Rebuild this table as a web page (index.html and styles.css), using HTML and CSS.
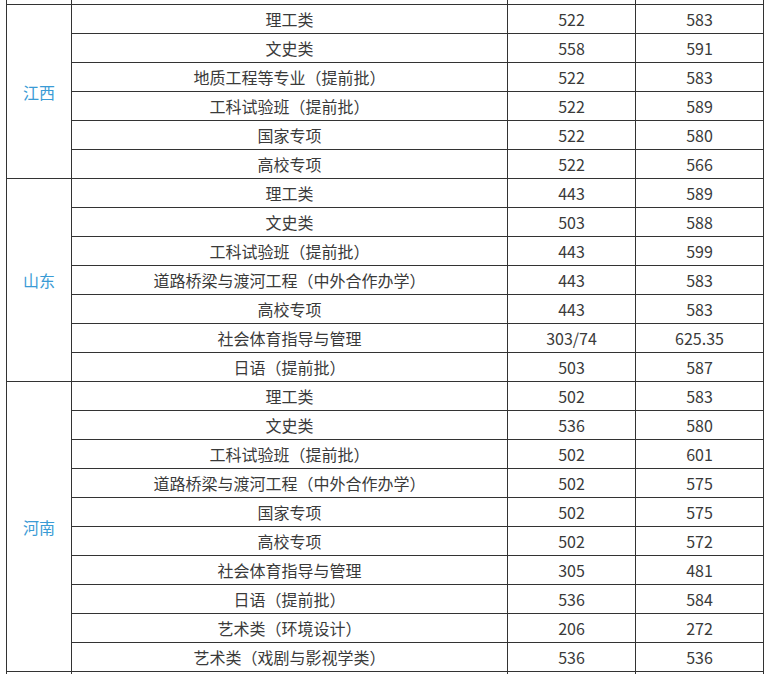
FILE: index.html
```html
<!DOCTYPE html>
<html lang="zh">
<head>
<meta charset="utf-8">
<link rel="stylesheet" href="styles.css">
</head>
<body>
<table class="scores">
  <colgroup>
    <col class="c-prov"><col class="c-major"><col class="c-num"><col class="c-num">
  </colgroup>
  <tbody>
    <tr><td></td><td></td><td></td><td></td></tr>
    <tr><td class="prov" rowspan="6">江西</td><td>理工类</td><td>522</td><td>583</td></tr>
    <tr><td>文史类</td><td>558</td><td>591</td></tr>
    <tr><td>地质工程等专业（提前批）</td><td>522</td><td>583</td></tr>
    <tr><td>工科试验班（提前批）</td><td>522</td><td>589</td></tr>
    <tr><td>国家专项</td><td>522</td><td>580</td></tr>
    <tr><td>高校专项</td><td>522</td><td>566</td></tr>
    <tr><td class="prov" rowspan="7">山东</td><td>理工类</td><td>443</td><td>589</td></tr>
    <tr><td>文史类</td><td>503</td><td>588</td></tr>
    <tr><td>工科试验班（提前批）</td><td>443</td><td>599</td></tr>
    <tr><td>道路桥梁与渡河工程（中外合作办学）</td><td>443</td><td>583</td></tr>
    <tr><td>高校专项</td><td>443</td><td>583</td></tr>
    <tr><td>社会体育指导与管理</td><td>303/74</td><td>625.35</td></tr>
    <tr><td>日语（提前批）</td><td>503</td><td>587</td></tr>
    <tr><td class="prov" rowspan="10">河南</td><td>理工类</td><td>502</td><td>583</td></tr>
    <tr><td>文史类</td><td>536</td><td>580</td></tr>
    <tr><td>工科试验班（提前批）</td><td>502</td><td>601</td></tr>
    <tr><td>道路桥梁与渡河工程（中外合作办学）</td><td>502</td><td>575</td></tr>
    <tr><td>国家专项</td><td>502</td><td>575</td></tr>
    <tr><td>高校专项</td><td>502</td><td>572</td></tr>
    <tr><td>社会体育指导与管理</td><td>305</td><td>481</td></tr>
    <tr><td>日语（提前批）</td><td>536</td><td>584</td></tr>
    <tr><td>艺术类（环境设计）</td><td>206</td><td>272</td></tr>
    <tr><td>艺术类（戏剧与影视学类）</td><td>536</td><td>536</td></tr>
    <tr><td></td><td></td><td></td><td></td></tr>
  </tbody>
</table>
</body>
</html>
```
FILE: styles.css
```css
html, body {
  margin: 0;
  padding: 0;
  background: #ffffff;
  overflow: hidden;
}
.scores {
  margin: -25px 0 0 6px;
  border-collapse: collapse;
  table-layout: fixed;
  width: 758px;
  font-family: "Noto Sans CJK SC", "Open Sans", sans-serif;
  font-size: 16px;
  color: #3a3a3a;
  text-spacing-trim: space-all;
}
.c-prov { width: 65px; }
.c-major { width: 436px; }
.c-num { width: 128px; }
.scores td {
  border: 1px solid #333333;
  height: 28px;
  padding: 0;
  text-align: center;
  vertical-align: middle;
  line-height: 28px;
  white-space: nowrap;
}
.scores td.prov {
  color: #3a9bd5;
}
```
